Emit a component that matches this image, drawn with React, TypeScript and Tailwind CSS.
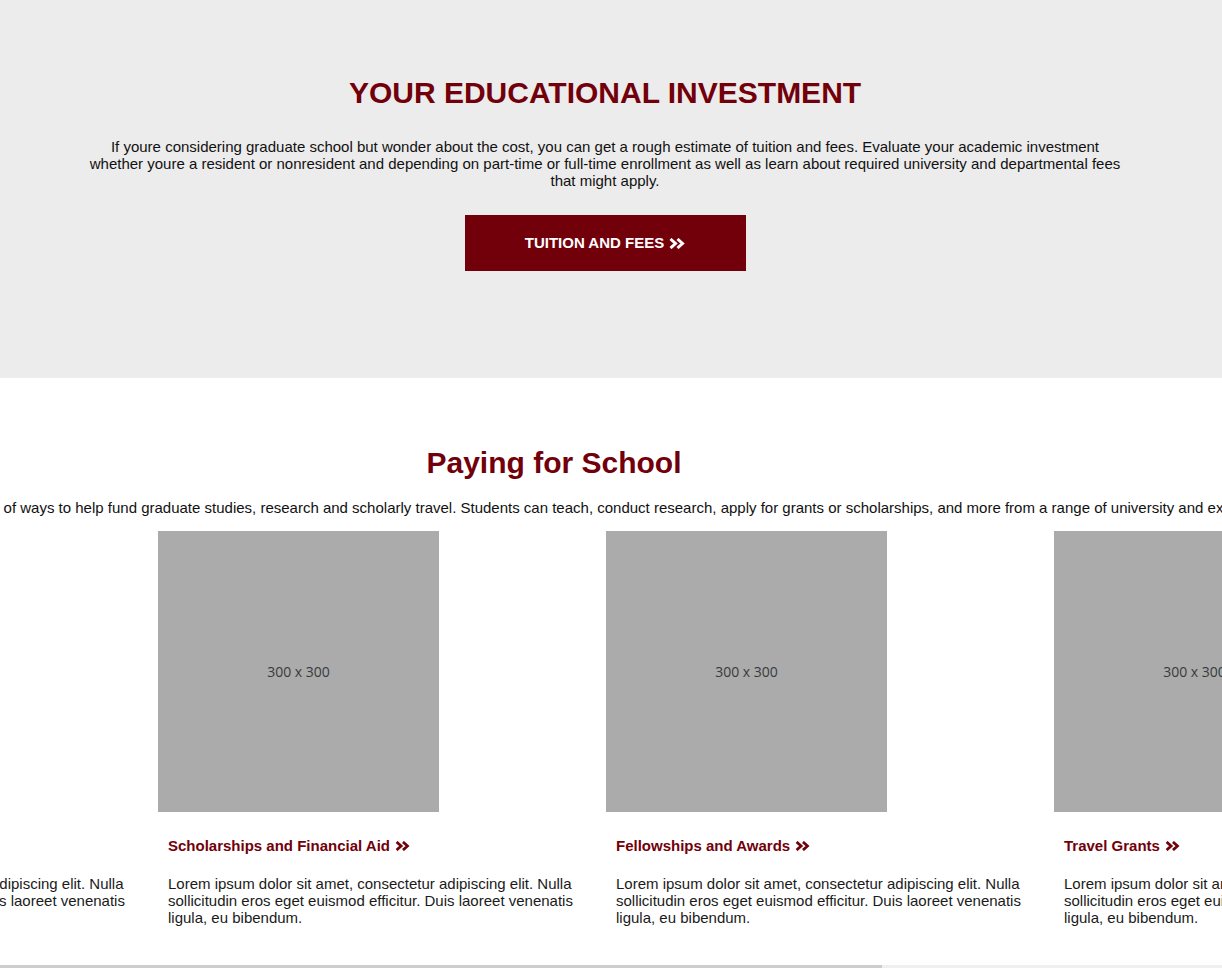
import React from "react";

const Chevrons = ({ className }: { className?: string }) => (
  <svg viewBox="0 0 16 11" className={className} fill="none" stroke="currentColor" strokeWidth={3} strokeLinecap="butt" strokeLinejoin="miter">
    <path d="M1.5 1l5 4.5-5 4.5" />
    <path d="M8.5 1l5 4.5-5 4.5" />
  </svg>
);

const cards = [
  { title: "Assistantships" },
  { title: "Scholarships and Financial Aid" },
  { title: "Fellowships and Awards" },
  { title: "Travel Grants" },
  { title: "Research Funding" },
];

const lorem =
  "Lorem ipsum dolor sit amet, consectetur adipiscing elit. Nulla sollicitudin eros eget euismod efficitur. Duis laoreet venenatis ligula, eu bibendum.";

export default function App() {
  return (
    <div className="relative h-[968px] w-full overflow-hidden bg-white font-['Liberation_Sans',Arial,sans-serif]">
      <section className="h-[378px] bg-[#ececec]">
        <div className="flex w-[1210px] flex-col items-center pt-[76px]">
          <h1 className="text-[30px] font-bold leading-[34px] text-[#72000a]">
            YOUR EDUCATIONAL INVESTMENT
          </h1>
          <p className="mt-[28px] w-[1040px] text-center text-[15px] leading-[17px] text-[#111]">
            If youre considering graduate school but wonder about the cost, you can get a rough estimate of tuition and fees. Evaluate your academic investment whether youre a resident or nonresident and depending on part-time or full-time enrollment as well as learn about required university and departmental fees that might apply.
          </p>
          <button className="mt-[26px] flex h-[56px] w-[281px] items-center justify-center gap-[5px] bg-[#72000a] text-[15px] font-bold text-white">
            TUITION AND FEES
            <Chevrons className="h-[11px] w-[16px]" />
          </button>
        </div>
      </section>

      <section className="overflow-hidden pt-[68px]">
        <div className="flex w-[1108px] flex-col items-center">
          <h2 className="text-[30px] font-bold leading-[34px] text-[#72000a]">
            Paying for School
          </h2>
          <p className="mt-[19px] whitespace-nowrap text-[15px] leading-[17px] text-[#111]">
            The Graduate School offers a wide variety of ways to help fund graduate studies, research and scholarly travel. Students can teach, conduct research, apply for grants or scholarships, and more from a range of university and external funding resources.
          </p>
        </div>
        <div className="ml-[-290px] mt-[15px] flex">
          {cards.map((c) => (
            <div key={c.title} className="w-[448px] shrink-0">
              <div className="flex h-[281px] w-[281px] items-center justify-center bg-[#ababab] font-['Open_Sans',sans-serif] text-[14px] text-[#3a3a3a]">
                300 x 300
              </div>
              <div className="w-[430px] px-[10px]">
                <a className="mt-[25px] flex items-center gap-[5px] text-[15px] font-bold leading-[17px] text-[#72000a]">
                  {c.title}
                  <Chevrons className="h-[10px] w-[15px]" />
                </a>
                <p className="mt-[21px] text-[15px] leading-[17px] text-[#1a1a1a]">{lorem}</p>
              </div>
            </div>
          ))}
        </div>
      </section>

      <div className="absolute bottom-0 left-0 h-[3px] w-full bg-[#efefef]">
        <div className="h-full w-[882px] bg-[#cdcdcd]" />
      </div>
    </div>
  );
}
